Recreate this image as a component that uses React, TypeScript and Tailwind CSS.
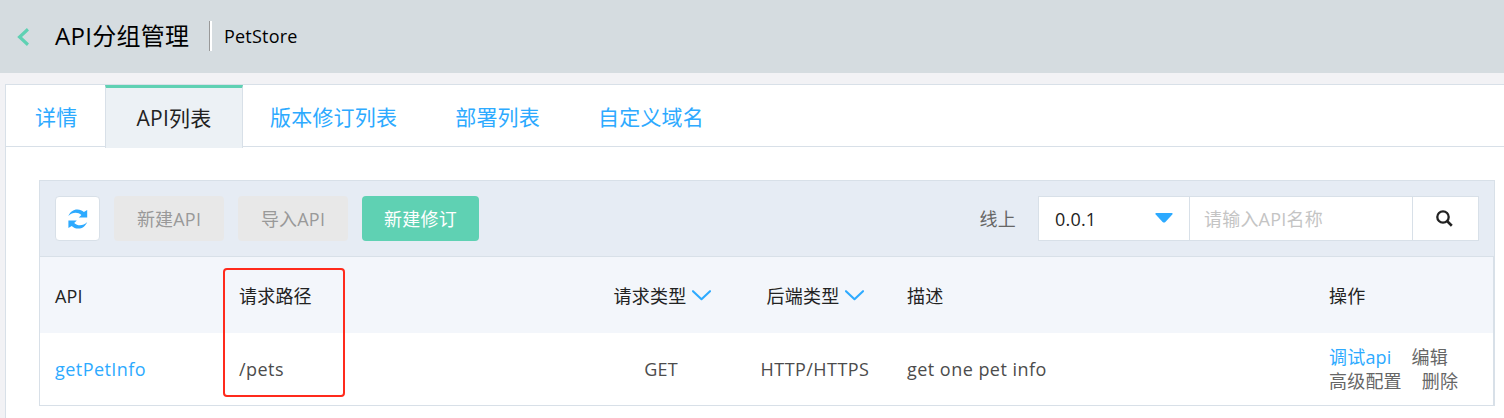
import type { ReactNode } from 'react';

const tabs = [
  { label: '版本修订列表', box: 'ml-[27px]' },
  { label: '部署列表', box: 'ml-[58px]' },
  { label: '自定义域名', box: 'ml-[58px]' },
];

const columns = 'grid grid-cols-[184px_363px_151px_155px_422px_1fr] items-center';

function BackIcon() {
  return (
    <svg width="12" height="18" viewBox="0 0 12 18" fill="none" className="mt-[2px] shrink-0">
      <path d="M11 1.3 2.6 9l8.4 7.7" stroke="#5fd1b3" strokeWidth="3.2" />
    </svg>
  );
}

function RefreshIcon() {
  return (
    <svg width="20" height="20" viewBox="0 0 20 20" fill="#2daaff">
      <path d="M.4 7C2.2 2.6 5.6.3 9.4.4c2.6 0 4.8 1 6.5 2.6L19.2 1v7.4h-8.4l2.6-2.3C9.6 2.6 4.2 3.2.4 7Z" />
      <path d="M19.2 13c-1.8 4.4-5.2 6.7-9 6.6-2.6 0-4.8-1-6.5-2.6L.4 19v-7.4h8.4l-2.6 2.3c3.8 3.5 9.2 2.9 13-.9Z" />
    </svg>
  );
}

function SearchIcon() {
  return (
    <svg width="17" height="17" viewBox="0 0 17 17" fill="none" stroke="#222" strokeWidth="2.3">
      <circle cx="7" cy="7" r="5.7" />
      <path d="m10.8 10.8 5 4.9" strokeWidth="2.6" />
    </svg>
  );
}

function FilterLabel({ children }: { children: ReactNode }) {
  return (
    <div className="flex items-center justify-center gap-[6px]">
      <span>{children}</span>
      <svg width="19" height="11" viewBox="0 0 19 11" fill="none">
        <path d="M1 1.2 9.5 9.2 18 1.2" stroke="#2daaff" strokeWidth="2.1" strokeLinecap="round" strokeLinejoin="round" />
      </svg>
    </div>
  );
}

export default function App() {
  return (
    <div className="h-[418px] w-full overflow-hidden bg-[#f2f2f5] font-['Open_Sans','Noto_Sans_CJK_SC',sans-serif] text-[18px] leading-6 tracking-[0.2px] whitespace-nowrap text-[#222]">
      <header className="flex h-[73px] items-center bg-[#d5dce0] pb-[2px] pl-[17px] text-black">
        <BackIcon />
        <h1 className="ml-[26px] w-[136px] text-2xl tracking-[0.3px]">API分组管理</h1>
        <div className="ml-[18px] h-[30px] w-[3px] border-l border-[#999] bg-white" />
        <span className="ml-3">PetStore</span>
      </header>

      <main className="mt-[11px] ml-[5px] h-[334px] border-t border-l border-[#d8e0e8] bg-white">
        <nav className="flex h-[62px] items-center border-b border-[#d8e0e8] text-[21px] text-[#2daaff]">
          <a className="w-[99px] pt-[2px] pl-[29px]">详情</a>
          <a className="-mb-[2px] flex h-[63px] w-[138px] items-center justify-center border-x border-t-[3px] border-x-[#d8e0e8] border-t-[#5fd1b3] bg-[#ecf1f5] text-[#222]">
            API列表
          </a>
          {tabs.map((tab) => (
            <a key={tab.label} className={`pt-[2px] ${tab.box}`}>{tab.label}</a>
          ))}
        </nav>

        <section className="mt-[33px] ml-[33px] w-[1456px] border border-[#d8e0e8]">
          <div className="flex h-[76px] items-center border-b border-[#d8e0e8] bg-[#e6ecf4] pr-[15px] pl-[15px]">
            <button className="flex h-[45px] w-[45px] items-center justify-center rounded-[4px] border border-[#d8e0e8] bg-white">
              <RefreshIcon />
            </button>
            <button className="ml-[14px] h-[45px] w-[110px] rounded-[4px] bg-[#e8e8e8] text-[#999]">新建API</button>
            <button className="ml-[14px] h-[45px] w-[110px] rounded-[4px] bg-[#e8e8e8] text-[#999]">导入API</button>
            <button className="ml-[14px] h-[45px] w-[117px] rounded-[4px] bg-[#5fd1b3] text-white">新建修订</button>
            <span className="ml-auto text-[#666]">线上</span>
            <div className="ml-[22px] flex h-[45px] w-[441px] border border-[#d8e0e8] bg-white">
              <div className="flex w-[151px] items-center justify-between border-r border-[#d8e0e8] pr-[16px] pl-[16px]">
                <span>0.0.1</span>
                <svg width="18" height="10" viewBox="0 0 18 10" className="mb-[1px]">
                  <path d="M1.2 0h15.6q1.4.3.5 1.4L10.4 9Q9 10.2 7.6 9L.7 1.4Q-.2.3 1.2 0Z" fill="#2daaff" />
                </svg>
              </div>
              <div className="flex w-[223px] items-center border-r border-[#d8e0e8] pl-[14px] text-[#c4c4c4]">请输入API名称</div>
              <div className="flex flex-1 items-center justify-center pr-[2px]">
                <SearchIcon />
              </div>
            </div>
          </div>

          <div className="border-r border-[#d8e0e8]">
            <div className={`${columns} h-[76px] bg-[#f3f6fb] pt-px`}>
              <span className="pl-[15px]">API</span>
              <span className="pl-[15px]">请求路径</span>
              <FilterLabel>请求类型</FilterLabel>
              <FilterLabel>后端类型</FilterLabel>
              <span className="pl-[14px]">描述</span>
              <span className="pl-[14px]">操作</span>
            </div>
            <div className={`${columns} h-[72px] text-[#4c4c4c]`}>
              <a className="pl-[15px] tracking-[0.45px] text-[#2daaff]">getPetInfo</a>
              <span className="pl-[15px] tracking-[0.45px]">/pets</span>
              <span className="pr-[3px] text-center">GET</span>
              <span className="pr-[1px] text-center tracking-[0.45px]">HTTP/HTTPS</span>
              <span className="pl-[14px] tracking-[0.47px]">get one pet info</span>
              <div className="pl-[14px] text-[#666]">
                <div className="flex gap-5"><a className="text-[#2daaff]">调试api</a><a>编辑</a></div>
                <div className="flex gap-5"><a>高级配置</a><a>删除</a></div>
              </div>
            </div>
          </div>
        </section>
      </main>

      <div className="pointer-events-none absolute top-[268px] left-[223px] h-[129px] w-[122px] rounded-[4px] border-2 border-[#ff2a1c]" />
    </div>
  );
}
